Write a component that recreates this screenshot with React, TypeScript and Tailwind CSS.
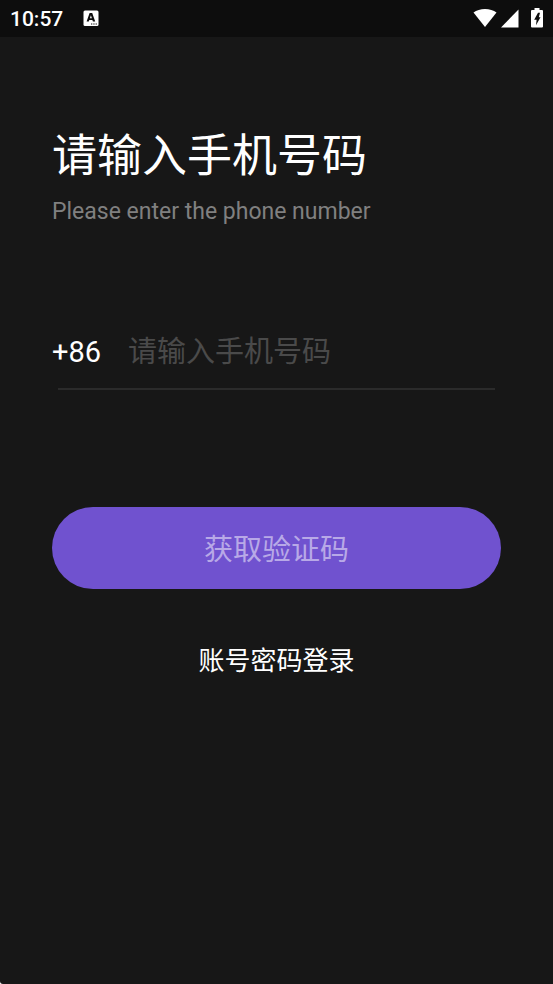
function WifiIcon() {
  return (
    <svg className="h-5 w-6" viewBox="0 0 24 20" fill="#fff" aria-hidden="true">
      <path d="M12 19 0.5 4.600C3.500 2 7.500 0.900 12 0.900s8.500 1.100 11.500 3.700z" />
    </svg>
  );
}

function SignalIcon() {
  return (
    <svg className="h-5 w-[18px]" viewBox="0 0 18 20" fill="#fff" aria-hidden="true">
      <path d="M17.500 1.500V19.500H0z" />
    </svg>
  );
}

function BatteryIcon() {
  return (
    <svg className="h-5 w-3" viewBox="0 0 12 20" aria-hidden="true">
      <path
        fill="#fff"
        d="M3.500 0h5v2H11a1 1 0 0 1 1 1v15.500a1 1 0 0 1-1 1H1a1 1 0 0 1-1-1V3a1 1 0 0 1 1-1h2.500z"
      />
      <path fill="#0d0d0d" d="M7 4.800h2L7.800 9.200h1.700L5 17.300l.6-5.600H3.200z" />
    </svg>
  );
}

function KeyboardIcon() {
  return (
    <svg className="h-4 w-4" viewBox="0 0 16 16" aria-hidden="true">
      <rect x="0.500" y="0.500" width="15" height="15.500" rx="1.500" fill="#fff" />
      <path
        fill="#0d0d0d"
        fillRule="evenodd"
        d="M6.600 3h2.600l3 8.500H9.900l-.5-1.600H6.300l-.5 1.600H3.600zM7.900 5.200 6.900 8.300h2z"
      />
      <path fill="#0d0d0d" d="M8 13.500h1.300v1H8zM10.300 13.500h1.300v1h-1.300zM12.600 13.500h1.300v1h-1.300z" />
    </svg>
  );
}

export default function App() {
  return (
    <div className="flex min-h-screen flex-col rounded-bl-[3px] bg-[#171717] font-[Roboto,'Noto_Sans_CJK_SC',sans-serif] text-white">
      <header className="flex h-[37px] items-center justify-between bg-[#0d0d0d] pr-[10px] pb-px pl-[10px]">
        <div className="flex items-center gap-5">
          <span className="pt-px text-[21px] leading-6 font-medium">10:57</span>
          <KeyboardIcon />
        </div>
        <div className="flex items-center">
          <WifiIcon />
          <span className="ml-1 flex">
            <SignalIcon />
          </span>
          <span className="ml-3 flex">
            <BatteryIcon />
          </span>
        </div>
      </header>

      <main className="flex flex-col px-[52px] pt-[87px]">
        <h1 className="text-[45px] leading-[66px]">请输入手机号码</h1>
        <p className="mt-[6px] text-[23px] leading-8 text-[#808080]">Please enter the phone number</p>

        <form className="mt-24 flex flex-col" onSubmit={(e) => e.preventDefault()}>
          <div className="flex h-14 items-center gap-[27px]">
            <label htmlFor="phone" className="text-[29px] leading-10">
              +86
            </label>
            <input
              id="phone"
              type="tel"
              placeholder="请输入手机号码"
              className="h-11 min-w-0 flex-1 bg-transparent text-[29px] leading-10 outline-none placeholder:text-[#4a4a4a]"
            />
          </div>
          <div className="mx-[6px] mt-2 h-[2px] bg-[#2b2b2b]" />
          <button
            type="submit"
            className="mt-[117px] h-[82px] rounded-full bg-[#7052cf] pt-1 text-[29px] leading-10 text-[#b8a9e7]"
          >
            获取验证码
          </button>
        </form>

        <a href="#password" className="mt-[52px] self-center text-[26px] leading-10">
          账号密码登录
        </a>
      </main>
    </div>
  );
}
